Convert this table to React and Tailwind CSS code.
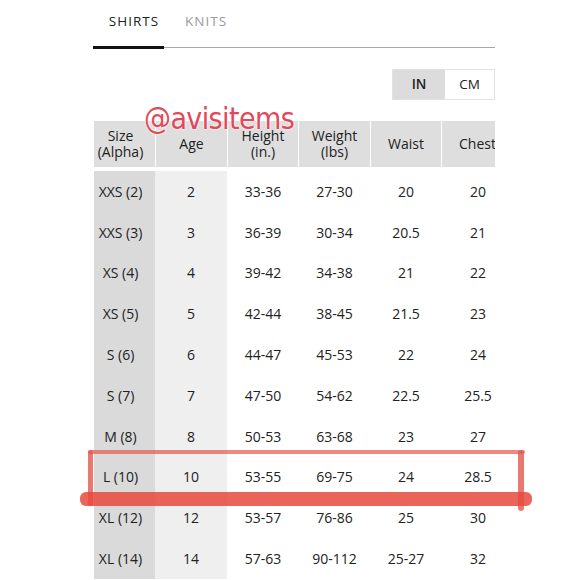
import React from 'react';

const rows = [
  ['XXS (2)', '2', '33-36', '27-30', '20', '20'],
  ['XXS (3)', '3', '36-39', '30-34', '20.5', '21'],
  ['XS (4)', '4', '39-42', '34-38', '21', '22'],
  ['XS (5)', '5', '42-44', '38-45', '21.5', '23'],
  ['S (6)', '6', '44-47', '45-53', '22', '24'],
  ['S (7)', '7', '47-50', '54-62', '22.5', '25.5'],
  ['M (8)', '8', '50-53', '63-68', '23', '27'],
  ['L (10)', '10', '53-55', '69-75', '24', '28.5'],
  ['XL (12)', '12', '53-57', '76-86', '25', '30'],
  ['XL (14)', '14', '57-63', '90-112', '25-27', '32'],
];

const headers = [
  ['Size', '(Alpha)'],
  ['Age'],
  ['Height', '(in.)'],
  ['Weight', '(lbs)'],
  ['Waist'],
  ['Chest'],
];

const cols = 'grid grid-cols-[61px_71px_70px_71px_70px_72px] gap-x-px';

export default function App() {
  return (
    <div
      className="relative w-[580px] h-[580px] overflow-hidden bg-white text-[#222]"
      style={{ fontFamily: '"Open Sans", "Noto Sans", sans-serif' }}
    >
      {/* Tabs */}
      <div className="ml-[93px] w-[402px] pt-[10px]">
        <div className="flex items-end h-[39px]">
          <div className="w-[71px] flex flex-col items-center">
            <span className="text-[13.5px] tracking-[1px] text-[#222] pl-[11px] pb-[15px]">SHIRTS</span>
            <div className="h-[3px] w-full bg-[#111]" />
          </div>
          <div className="flex-1 flex flex-col">
            <span className="text-[13.5px] tracking-[1px] text-[#9a9a9a] pl-[21px] pb-[16px]">KNITS</span>
            <div className="h-px w-full bg-[#a8a8a8] mb-px" />
          </div>
        </div>

        {/* Units toggle */}
        <div className="flex justify-end mt-[20px]">
          <div className="flex h-[31px] border border-[#e2e2e2] text-[13.5px]">
            <div className="w-[52px] flex items-center justify-center bg-[#dcdcdc] font-semibold">IN</div>
            <div className="w-[49px] flex items-center justify-center bg-white">CM</div>
          </div>
        </div>
      </div>

      {/* Table */}
      <div className="ml-[94px] mt-[21px] w-[401px] overflow-hidden text-[14px]">
        <div className={`${cols} h-[46px]`}>
          {headers.map((h, i) => (
            <div
              key={i}
              className={`bg-[#dedede] flex flex-col items-center justify-center leading-[16px] ${i === 0 ? 'pr-[8px]' : ''} ${i === 5 ? 'pr-[1px]' : ''}`}
            >
              {h.map((t) => (
                <span key={t}>{t}</span>
              ))}
            </div>
          ))}
        </div>
        <div className="mt-[4px]">
          {rows.map((r) => (
            <div key={r[0]} className={`${cols} h-[40.8px]`}>
              {r.map((c, i) => (
                <div
                  key={i}
                  className={`flex items-center justify-center ${
                    i === 0 ? 'bg-[#dadada] pr-[8px]' : i === 1 ? 'bg-[#efefef] -ml-px' : 'bg-white'
                  }`}
                >
                  {c}
                </div>
              ))}
            </div>
          ))}
        </div>
      </div>

      {/* Watermark */}
      <div
        className="absolute left-[144px] top-[104px] text-[30px] leading-none text-[#e2485a] tracking-[-0.6px]"
        style={{ fontFamily: '"DejaVu Sans Condensed", "DejaVu Sans", sans-serif', fontWeight: 200, textShadow: '0 0 2px #fff, 0 0 2px #fff' }}
      >
        @avisitems
      </div>

      {/* Red highlight box */}
      <div className="absolute left-[88px] top-[450px] w-[437px] h-[4px] bg-[#e4574c]/70 rounded-sm" />
      <div className="absolute left-[88px] top-[450px] w-[5px] h-[56px] bg-[#e4574c]/80 rounded-sm" />
      <div className="absolute left-[518px] top-[450px] w-[6px] h-[61px] bg-[#e4574c]/80 rounded-sm" />
      <div className="absolute left-[80px] top-[492px] w-[452px] h-[14px] bg-[#e8493d]/85 rounded-[6px]" />
    </div>
  );
}
